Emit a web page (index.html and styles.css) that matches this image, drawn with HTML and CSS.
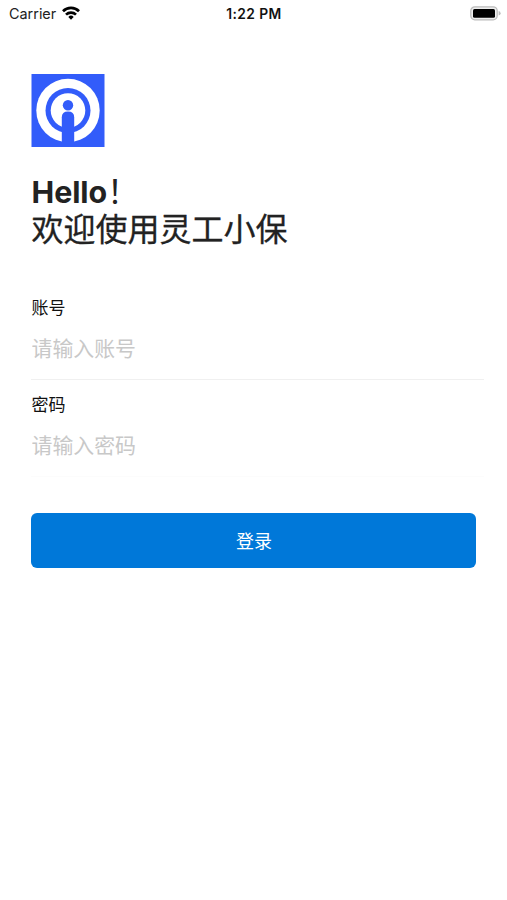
FILE: index.html
```html
<!DOCTYPE html>
<html lang="zh-CN">
<head>
  <meta charset="UTF-8">
  <title>灵工小保</title>
  <link rel="stylesheet" href="styles.css">
</head>
<body>

<div class="status-bar">
  <div class="carrier">
    <span>Carrier</span>
    <svg class="wifi" width="18" height="14" viewBox="0 0 18 14" fill="none" stroke="#000" stroke-width="2.7">
      <path d="M1 5.2A11.4 11.4 0 0 1 17 5.2"/>
      <path d="M4 8.6A7.2 7.2 0 0 1 14 8.6"/>
      <path d="M6.3 10.9A3.8 3.8 0 0 1 11.7 10.9L9 13.7Z" fill="#000" stroke="none"/>
    </svg>
  </div>
  <div class="time">1:22 PM</div>
  <svg class="battery" width="31" height="15" viewBox="0 0 31 15">
    <rect x="0.8" y="0.8" width="26.4" height="13" rx="4" fill="#eee" stroke="#bcbcbc" stroke-width="1.3"/>
    <rect x="3" y="2.9" width="22" height="8.8" rx="1.5" fill="#000"/>
    <path d="M28.6 5Q30.6 5.6 30.6 7.3T28.6 9.6Z" fill="#bcbcbc"/>
  </svg>
</div>

<div class="login">
  <svg class="logo" width="74" height="73" viewBox="0 0 74 73">
    <rect x="0.5" width="73" height="73" fill="#325cfa"/>
    <circle cx="37" cy="36.5" r="31.7" fill="#fff"/>
    <circle cx="37" cy="36.5" r="22.5" fill="#325cfa"/>
    <circle cx="37" cy="36.5" r="17.3" fill="#fff"/>
    <circle cx="37" cy="31.2" r="5.2" fill="#325cfa"/>
    <path d="M30.8 73V43.2Q30.8 37.6 37 37.6T43.2 43.2V73Z" fill="#325cfa"/>
  </svg>

  <h1><b>Hello</b><span class="mark">！</span><br><span class="welcome">欢迎使用灵工小保</span></h1>

  <form>
    <div class="field">
      <label for="account">账号</label>
      <input type="text" id="account" placeholder="请输入账号">
    </div>
    <div class="field last">
      <label for="password">密码</label>
      <input type="password" id="password" placeholder="请输入密码">
    </div>
    <button type="button">登录</button>
  </form>
</div>

</body>
</html>
```

FILE: styles.css
```css
* { box-sizing: border-box; }
body { margin: 0; background: #fff; color: #222; font-family: Inter, "Noto Sans CJK SC", sans-serif; }

.status-bar { display: grid; grid-template-columns: 1fr auto 1fr; align-items: center; height: 27px; padding: 0 6px 0 9px; color: #222; font-size: 14.4px; }
.carrier { display: flex; align-items: center; gap: 6px; }
.wifi { margin-top: -2px; }
.time { margin-left: -2px; font-size: 13.8px; font-weight: 600; letter-spacing: 0.4px; color: #111; }
.battery { justify-self: end; }

.login { padding: 47px 23px 0 31px; }
.logo { display: block; }

h1 { margin: 23px 0 0 0.6px; font-size: 32px; line-height: 38px; font-weight: 400; }
h1 b { font-size: 30.4px; font-weight: 700; letter-spacing: -0.1px; }
.mark { font-family: "Noto Sans CJK SC", sans-serif; }
.welcome { -webkit-text-stroke: 0.3px #222; }

form { margin-top: 46px; }
.field { height: 85px; padding-left: 0.5px; border-bottom: 1px solid #f0f0f0; }
.field + .field { margin-top: 12px; }
.field.last { border-color: #fcfcfc; }
label { display: block; height: 26px; line-height: 26px; font-size: 17px; color: #111; }
input { display: block; width: 100%; height: 30px; margin-top: 11px; padding: 0; border: none; outline: none; background: none; font: 20.9px "Noto Sans CJK SC", sans-serif; }
input::placeholder { color: #c8c8c8; opacity: 1; }

button { display: block; width: 445px; height: 55px; margin-top: 36px; margin-left: 0.4px; padding: 0 0 2px; border: none; border-radius: 6px; background: #0078d9; color: #fff; font: 18px "Noto Sans CJK SC", sans-serif; }
```
